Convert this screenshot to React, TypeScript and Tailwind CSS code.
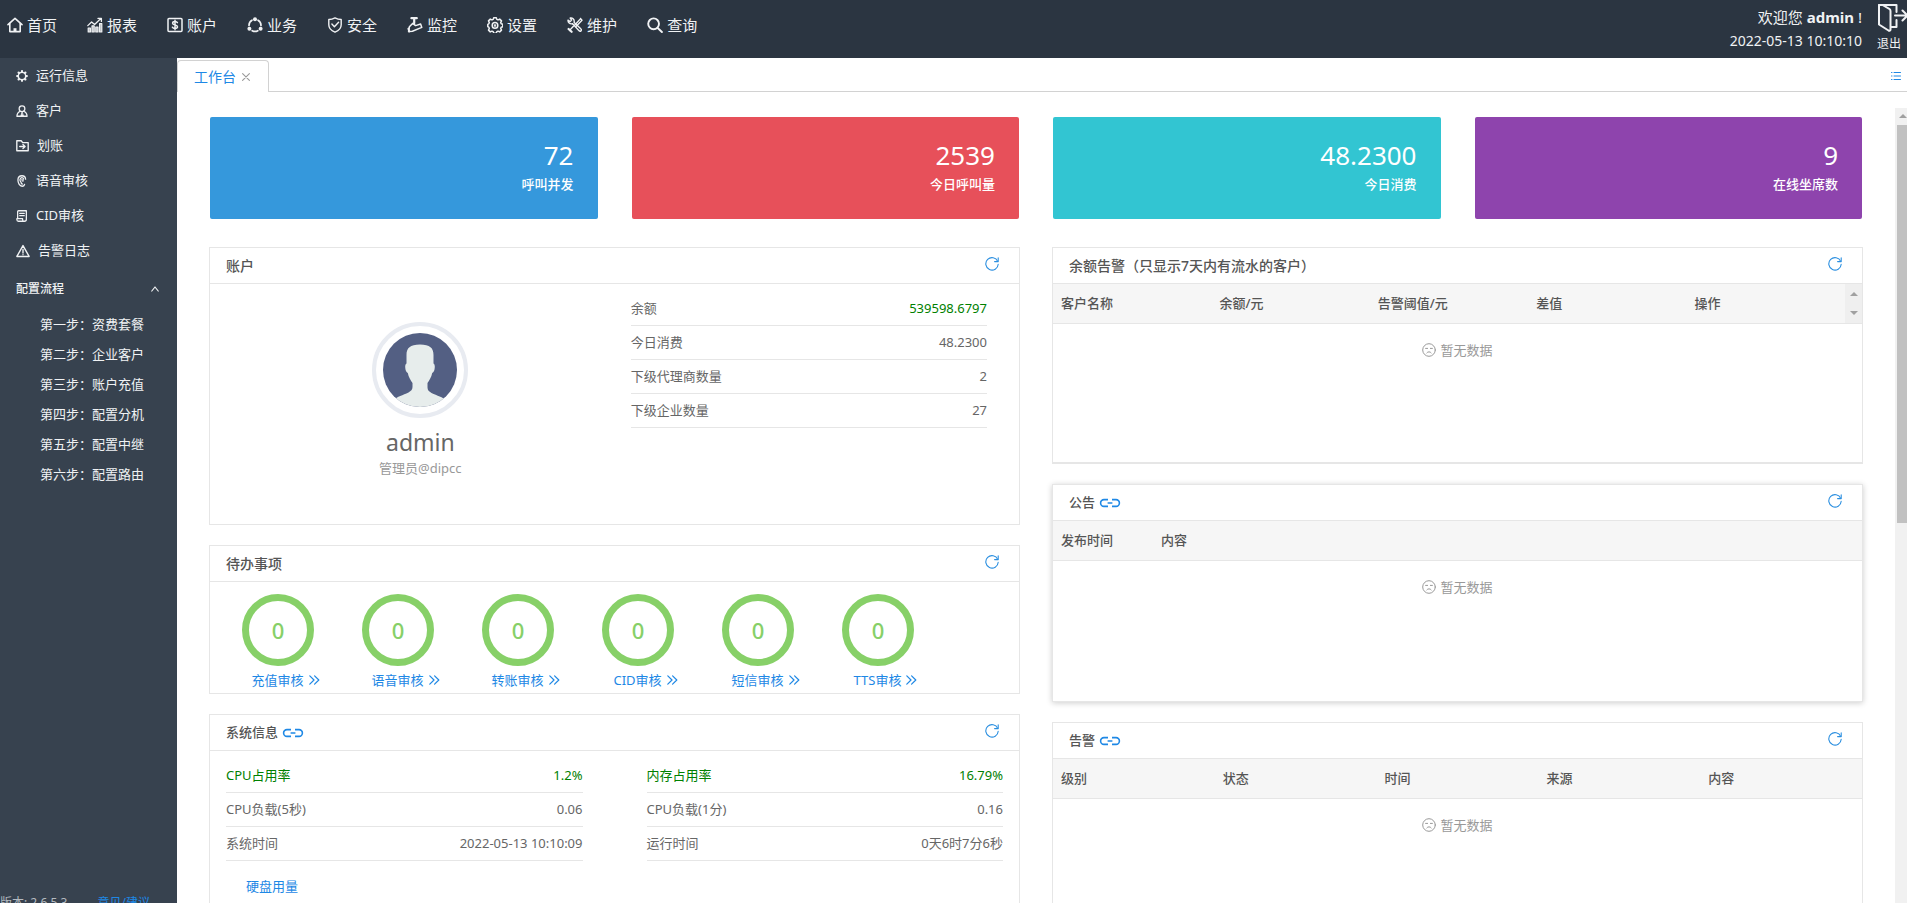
import type { ReactNode } from "react";

type IconProps = { className?: string };

const Svg = ({ children, className = "size-4", box = "0 0 16 16", width = 1.4 }: { children: ReactNode; className?: string; box?: string; width?: number }) => (
  <svg aria-hidden="true" viewBox={box} className={className} fill="none" stroke="currentColor" strokeWidth={width} strokeLinecap="round" strokeLinejoin="round">
    {children}
  </svg>
);

const HomeIcon = () => (
  <Svg width={1.6}>
    <path d="M1 7.6 8 1.4l7 6.2" />
    <path d="M2.8 6.6v8h10.4v-8" />
    <path d="M8 11.2v3.2" strokeWidth={3} strokeLinecap="butt" />
  </Svg>
);
const ReportIcon = () => (
  <Svg width={1.3}>
    <path d="M.8 8.6 4.6 5l3 2.4 6-5.6M11 1.4h3.4v3" />
    <path d="M1.2 11h2.2v4H1.2zM5 8.8h2.2V15H5zM8.8 10h2.2v5H8.8zM12.6 6.6h2.2V15h-2.2z" fill="currentColor" fillOpacity={0.7} strokeWidth={1.2} />
  </Svg>
);
const AccountIcon = () => (
  <Svg width={1.5}>
    <rect x="1" y="1.6" width="14" height="12.8" rx="1" />
    <path d="M10.4 5.6C10 4.8 9.2 4.5 8 4.5c-1.5 0-2.4.7-2.4 1.7 0 2.5 4.9 1.1 4.9 3.6 0 1.1-1 1.7-2.5 1.7-1.3 0-2.2-.5-2.600-1.3M8 3.200v9.600" />
  </Svg>
);
const BusinessIcon = () => (
  <Svg width={1.7}>
    <path d="M5 3.200A6 6 0 0 0 2 8.400M11 3.200a6 6 0 0 1 3 5.200M5.200 13.700a6 6 0 0 0 5.600 0" />
    <g fill="currentColor" stroke="none">
      <circle cx="8" cy="2.200" r="2" />
      <circle cx="2.400" cy="11.800" r="2" />
      <circle cx="13.600" cy="11.800" r="2" />
    </g>
  </Svg>
);
const ShieldIcon = () => (
  <Svg width={1.4}>
    <path d="M8 .9c2 1.100 4.200 1.600 6.200 1.600v5.300c0 3.400-2.400 5.900-6.200 7.400-3.800-1.500-6.200-4-6.200-7.400V2.500C3.800 2.500 6 2 8 .9z" />
    <path d="m4.900 7 2.500 2.700 4.200-4.500" />
  </Svg>
);
const CameraIcon = () => (
  <Svg width={1.5}>
    <path d="M4.400 1.200h5.400M7.200 1.200v5" strokeWidth={2.200} />
    <path d="m2.400 9.800 3.200-3.400 3 2.200 5-1.600 1.200 3.400-9.400 3.800-3.800.4z" />
    <path d="m1.400 11.600.8 3" strokeWidth={2} />
  </Svg>
);
const GearIcon = ({ className = "size-4" }: IconProps) => (
  <Svg className={className} width={1.500}>
    <path d="m6.700.8h2.600l.5 1.600 1.200.5 1.700-.8 1.800 1.800-.8 1.700.5 1.200 1.600.5v2.400l-1.600.5-.5 1.200.8 1.700-1.800 1.800-1.700-.8-1.200.5-.5 1.600H6.700l-.5-1.600-1.200-.5-1.700.8-1.800-1.800.8-1.700-.5-1.200-1-.5V7.300l1-.5.500-1.200-.8-1.700 1.800-1.800 1.700.8 1.200-.5z" />
    <circle cx="8" cy="8.400" r="2.800" />
    <circle cx="8" cy="8.400" r=".5" />
  </Svg>
);
const ToolsIcon = () => (
  <Svg width={1.4}>
    <path d="m5.600 6.800 6 6.400c.8.900 1.700 1.300 2.400.7s.4-1.700-.5-2.400L7.200 5.500" />
    <path d="M1 3.200 3.200 4.600 4.600 3 3.200 1c2.200-.5 4.300 1 4 3.800M1 3.200c-.2 2.300 1.800 4.200 4.400 3.600" />
    <path d="m13.600 1.600-6 6.600M15 3.200 9 9.400M13.600 1.600 15 3.200M6.400 9.200 2.600 13.400" />
    <path d="m1.600 12 3 2.800" strokeWidth={2.200} />
  </Svg>
);
const SearchIcon = () => (
  <Svg width={1.9}>
    <circle cx="6.600" cy="6.800" r="5.400" />
    <path d="m10.700 11 4.200 4" />
  </Svg>
);
const ExitIcon = () => (
  <svg aria-hidden="true" viewBox="0 0 32 29" className="h-[29px] w-8" fill="none" stroke="currentColor" strokeWidth="2" strokeLinejoin="round" strokeLinecap="round">
    <path d="M2 2h17.500v7M19.500 17v7H14" />
    <path d="M2 2v19.500l9.500 6c1 .5 2 0 2-1V8c0-1-.4-1.700-1.200-2.200L5.500 2" />
    <path d="M18 12.500h12M25.500 7.500l5 5-5 5" />
  </svg>
);

const RunIcon = () => (
  <Svg className="size-3" width={1.8}>
    <circle cx="8" cy="8" r="4.900" />
    <path d="M8 1.600v.8M8 13.600v.8M1.600 8h.8M13.600 8h.8M3.500 3.500l.6.6M11.900 11.900l.6.6M3.500 12.500l.6-.6M11.900 4.100l.6-.6" strokeWidth={3} />
  </Svg>
);
const CustomerIcon = () => (
  <Svg className="size-3" width={1.7}>
    <circle cx="8" cy="5" r="3.800" />
    <path d="M5.600 8.600C3 9.400 1.400 11.600 1.200 15h13.600c-.2-3.400-1.800-5.600-4.400-6.400" />
    <path d="M8 9.600 6.400 14.600h3.200z" fill="currentColor" strokeWidth={1} />
  </Svg>
);
const TransferIcon = () => (
  <Svg className="size-[13px]" width={1.7}>
    <path d="M1 2.200h5.400l1.800 2.200H15v10H1z" />
    <path d="M4.600 9.200h6M8.600 6.800l2.600 2.400-2.600 2.400" />
  </Svg>
);
const EarIcon = () => (
  <Svg className="size-3" width={1.7}>
    <path d="M12.800 5.600C12.600 3 10.800 1 8 1 5 1 2.600 3.200 2.600 6.600c0 3.800 2 8.400 5.600 8.400 1.800 0 2.800-1 3.200-2.400" />
    <path d="M10.200 5.400C9.800 4.200 9 3.600 8 3.600c-1.600 0-2.700 1.200-2.700 3 0 2.200 1.500 2.200 1.700 3.800.2 1.200.8 1.800 1.600 1.600M7.600 6.600c1.500-.5 2.300.6 1.600 1.800" />
  </Svg>
);
const DocIcon = () => (
  <Svg className="size-3" width={1.7}>
    <path d="M2.200 11.600V2.400C2.200 1.600 2.600 1 3.600 1h10.200v11.400c0 1.600-.8 2.600-2.400 2.600H3.200c-1.400 0-2-.8-2-2v-1.400h7.600V13c0 1.200.8 2 2 2" />
    <path d="M5 4.600h6M5 7.600h6" />
  </Svg>
);
const WarnIcon = () => (
  <Svg className="size-[14px]" width={1.6}>
    <path d="M8 1.800 15 14.200H1z" />
    <path d="M8 6.200v4M8 12.200v.1" />
  </Svg>
);

const RefreshIcon = () => (
  <Svg className="size-[14px]" box="0 0 14 14" width={1.1}>
    <path d="M12.700 4.400A6.200 6.200 0 1 0 13.200 7.200" />
    <path d="M13.200.9v3.700H9.600" />
  </Svg>
);
const LinkIcon = () => (
  <svg aria-hidden="true" viewBox="0 0 22 10" className="h-[10px] w-[22px]" fill="none" stroke="currentColor" strokeWidth="1.600">
    <path d="M9 1.600H5a3.300 3.300 0 0 0 0 6.800h4M13 1.600h4a3.300 3.300 0 0 1 0 6.800h-4M8.600 5h4.800" />
  </svg>
);
const SadIcon = () => (
  <Svg className="size-[14px]" box="0 0 14 14" width={1}>
    <circle cx="7" cy="7" r="6.300" />
    <path d="M3.600 5.400h2M8.400 5.400h2M4.800 9.900c1-1.500 3.400-1.500 4.400 0" />
  </Svg>
);
const MoreIcon = () => (
  <Svg className="h-[10px] w-[11px]" box="0 0 11 10" width={1.2}>
    <path d="m.8.8 4.200 4.200L.8 9.200M5.600.8 9.800 5 5.600 9.200" />
  </Svg>
);
const Avatar = () => (
  <span className="flex size-24 items-center justify-center rounded-full border-4 border-[#e8ebf1]">
    <svg role="img" aria-label="admin" viewBox="0 0 74 74" className="size-[74px]">
      <clipPath id="face">
        <circle cx="37" cy="37" r="37" />
      </clipPath>
      <g clipPath="url(#face)">
        <rect width="74" height="74" fill="#535f83" />
        <path
          fill="#e7edec"
          d="M23.500 22c0-7 3.500-10.500 13.500-10.500S50.500 15 50.500 22v8.500c1.500 1 1.500 3.500 1 6-.4 2-1.300 3-2.300 3.500-.7 4-3 7.500-4.700 10v4.500c0 2.500 1.500 4 4 5.500 5.500 2.500 11.500 4.500 14.500 7V76H11v-9.500c3-2.500 9-4.500 14.500-7 2.500-1.500 4-3 4-5.500V50c-1.700-2.500-4-6-4.700-10-1-.5-1.900-1.500-2.300-3.500-.5-2.500-.5-5 1-6z"
        />
      </g>
    </svg>
  </span>
);

const nav = [
  { label: "首页", icon: <HomeIcon /> },
  { label: "报表", icon: <ReportIcon /> },
  { label: "账户", icon: <AccountIcon /> },
  { label: "业务", icon: <BusinessIcon /> },
  { label: "安全", icon: <ShieldIcon /> },
  { label: "监控", icon: <CameraIcon /> },
  { label: "设置", icon: <GearIcon /> },
  { label: "维护", icon: <ToolsIcon /> },
  { label: "查询", icon: <SearchIcon /> },
];
const side = [
  { label: "运行信息", icon: <RunIcon /> },
  { label: "客户", icon: <CustomerIcon /> },
  { label: "划账", icon: <TransferIcon /> },
  { label: "语音审核", icon: <EarIcon /> },
  { label: "CID审核", icon: <DocIcon /> },
  { label: "告警日志", icon: <WarnIcon /> },
];
const steps = ["第一步：资费套餐", "第二步：企业客户", "第三步：账户充值", "第四步：配置分机", "第五步：配置中继", "第六步：配置路由"];
const stats = [
  { value: "72", label: "呼叫并发", color: "bg-[#3598dc]" },
  { value: "2539", label: "今日呼叫量", color: "bg-[#e7505a]" },
  { value: "48.2300", label: "今日消费", color: "bg-[#32c5d2]" },
  { value: "9", label: "在线坐席数", color: "bg-[#8e44ad]" },
];
const todos = ["充值审核", "语音审核", "转账审核", "CID审核", "短信审核", "TTS审核"];

function Panel({ title, link, raised, className = "", children }: { title: string; link?: boolean; raised?: boolean; className?: string; children: ReactNode }) {
  return (
    <section className={`border border-[#e6e6e6] bg-white ${raised ? "shadow-[0_1px_6px_rgba(0,0,0,0.2)]" : ""} ${className}`}>
      <header className="flex h-9 items-center justify-between border-b border-[#e6e6e6] pr-5 pl-4">
        <h2 className={`flex items-center gap-1 font-medium text-[#555] ${link ? "text-[13px]" : "text-sm"}`}>
          {title}
          {link && (
            <a href="#detail" aria-label={`${title}详情`} className="text-[#1e88e5]">
              <LinkIcon />
            </a>
          )}
        </h2>
        <button type="button" aria-label={`刷新${title}`} className="mb-1 text-[#2b8fe0]">
          <RefreshIcon />
        </button>
      </header>
      {children}
    </section>
  );
}

function Row({ name, value, nameGreen, valueGreen }: { name: string; value: string; nameGreen?: boolean; valueGreen?: boolean }) {
  return (
    <div className="flex h-[34px] items-center justify-between border-b border-[#e6e6e6]">
      <dt className={nameGreen ? "text-[#008000]" : ""}>{name}</dt>
      <dd className={valueGreen ? "text-[#008000]" : ""}>{value}</dd>
    </div>
  );
}

function Grid({ columns, narrowFirst, stepper }: { columns: string[]; narrowFirst?: boolean; stepper?: boolean }) {
  return (
    <>
      <div className="flex border-b border-[#e6e6e6] bg-[#f6f6f6]">
        <div className="min-w-0 flex-1">
          <table className="w-full table-fixed">
            <thead>
              <tr className="h-[39px]">
                {columns.map((c, i) => (
                  <th key={c} scope="col" className={`pl-2 text-left font-medium text-[#555] ${narrowFirst && i === 0 ? "w-[100px]" : ""}`}>
                    {c}
                  </th>
                ))}
              </tr>
            </thead>
          </table>
        </div>
        {stepper && (
          <div className="flex w-[17px] flex-col items-center justify-between bg-[#efefef] py-2">
            <span className="border-x-4 border-b-4 border-x-transparent border-b-[#a0a0a0]" />
            <span className="border-x-4 border-t-4 border-x-transparent border-t-[#a0a0a0]" />
          </div>
        )}
      </div>
      <p className="flex items-center justify-center gap-1 pt-4 leading-5 text-[#999]">
        <SadIcon />
        暂无数据
      </p>
    </>
  );
}

export default function App() {
  return (
    <div className="flex h-screen flex-col overflow-hidden bg-white font-['Noto_Sans','Noto_Sans_CJK_SC',sans-serif] text-[13px] text-[#666]">
      <header className="flex h-[58px] shrink-0 justify-between bg-[#2b3541] text-[#f0f2f4]">
        <nav className="flex h-[50px] items-center gap-[30px] pl-[7px]">
          {nav.map((n) => (
            <a key={n.label} href="#nav" className="flex items-center gap-1 text-[15px] leading-5">
              {n.icon}
              {n.label}
            </a>
          ))}
        </nav>
        <div className="flex gap-[15px]">
          <div className="pt-[5px] text-right text-[15px] leading-6">
            <p>
              欢迎您 <b>admin</b> !
            </p>
            <p className="text-sm leading-6">2022-05-13 10:10:10</p>
          </div>
          <button type="button" className="flex w-[30px] flex-col items-start overflow-hidden pt-[3px] text-xs leading-6">
            <ExitIcon />
            退出
          </button>
        </div>
      </header>

      <div className="flex min-h-0 flex-1">
        <aside className="flex w-[177px] shrink-0 flex-col overflow-hidden bg-[#37424f] text-[#f0f2f4]">
          {side.map((s) => (
            <a key={s.label} href="#menu" className="flex h-[35px] shrink-0 items-center gap-2 pl-4">
              {s.icon}
              {s.label}
            </a>
          ))}
          <button type="button" className="flex h-[42px] shrink-0 items-center justify-between pr-[18px] pl-4 text-xs font-medium">
            配置流程
            <Svg className="size-2" box="0 0 8 8" width={1.2}>
              <path d="m.8 6 3.200-4L7.200 6" />
            </Svg>
          </button>
          {steps.map((s) => (
            <a key={s} href="#step" className="flex h-[30px] shrink-0 items-center pl-10">
              {s}
            </a>
          ))}
          <footer className="-mb-2.5 mt-auto flex shrink-0 gap-[30px] text-xs leading-5 text-[#b4bac0]">
            <span>版本: 2.6.5.3</span>
            <a href="#feedback" className="text-[#1e88e5]">
              意见/建议
            </a>
          </footer>
        </aside>

        <main className="flex min-w-0 flex-1 flex-col">
          <div className="flex h-[34px] shrink-0 items-stretch pt-0.5">
            <div className="flex w-[92px] items-center gap-1.5 rounded-t border border-b-0 border-[#d2d2d2] pl-4 text-sm text-[#1e88e5]">
              工作台
              <button type="button" aria-label="关闭工作台" className="text-[#999]">
                <Svg className="size-2" box="0 0 8 8" width={1.1}>
                  <path d="m.6.6 6.800 6.800M7.400.6.6 7.400" />
                </Svg>
              </button>
            </div>
            <div className="flex flex-1 items-center justify-end border-b border-[#d2d2d2] pr-1.5">
              <button type="button" aria-label="标签页列表" className="text-[#1e88e5]">
                <Svg className="h-2 w-[10px]" box="0 0 10 8" width={1}>
                  <path d="M.5.5h.5M3 .5h6.500M.5 4h.5M3 4h6.500M.5 7.500h.5M3 7.500h6.500" />
                </Svg>
              </button>
            </div>
          </div>

          <div className="flex min-h-0 flex-1">
            <div className="min-w-0 flex-1 overflow-hidden pt-[25px] pr-8 pl-8">
              <div className="grid grid-cols-4 gap-[34px] px-px">
                {stats.map((s) => (
                  <div key={s.label} className={`h-[102px] rounded-xs pt-5 pr-6 text-right text-white ${s.color}`}>
                    <p className="text-[26px] leading-9">{s.value}</p>
                    <p className="text-[13px] leading-[22px] font-medium">{s.label}</p>
                  </div>
                ))}
              </div>

              <div className="mt-7 grid grid-cols-2 gap-8">
                <div className="flex flex-col gap-5">
                  <Panel title="账户" className="h-[278px]">
                    <div className="grid grid-cols-[52fr_48fr]">
                      <div className="flex flex-col items-center pt-[38px]">
                        <Avatar />
                        <p className="mt-2 text-[23px] leading-8">admin</p>
                        <p className="leading-5 text-[#999]">管理员@dipcc</p>
                      </div>
                      <dl className="mr-8 pt-2">
                        <Row name="余额" value="539598.6797" valueGreen />
                        <Row name="今日消费" value="48.2300" />
                        <Row name="下级代理商数量" value="2" />
                        <Row name="下级企业数量" value="27" />
                      </dl>
                    </div>
                  </Panel>
                  <Panel title="待办事项" className="h-[149px]">
                    <div className="flex pt-3 pl-2">
                      {todos.map((t) => (
                        <div key={t} className="flex w-[120px] flex-col items-center">
                          <span className="flex size-[72px] items-center justify-center rounded-full border-[7px] border-[#87d068] text-[22px] leading-6 font-medium text-[#87d068]">0</span>
                          <a href="#todo" className="flex items-center gap-[5px] pt-1 pl-[15px] leading-5 text-[#1e88e5]">
                            {t}
                            <MoreIcon />
                          </a>
                        </div>
                      ))}
                    </div>
                  </Panel>
                  <Panel title="系统信息" link className="h-[300px]">
                    <div className="grid grid-cols-2 gap-16 px-4 pt-2">
                      <dl>
                        <Row name="CPU占用率" value="1.2%" nameGreen valueGreen />
                        <Row name="CPU负载(5秒)" value="0.06" />
                        <Row name="系统时间" value="2022-05-13 10:10:09" />
                      </dl>
                      <dl>
                        <Row name="内存占用率" value="16.79%" nameGreen valueGreen />
                        <Row name="CPU负载(1分)" value="0.16" />
                        <Row name="运行时间" value="0天6时7分6秒" />
                      </dl>
                    </div>
                    <a href="#disk" className="mt-[15px] ml-9 inline-block leading-5 text-[#1e88e5]">
                      硬盘用量
                    </a>
                  </Panel>
                </div>

                <div className="flex flex-col gap-5">
                  <Panel title="余额告警（只显示7天内有流水的客户）" className="h-[217px] border-b-2">
                    <Grid columns={["客户名称", "余额/元", "告警阈值/元", "差值", "操作"]} stepper />
                  </Panel>
                  <Panel title="公告" link raised className="h-[218px]">
                    <Grid columns={["发布时间", "内容"]} narrowFirst />
                  </Panel>
                  <Panel title="告警" link className="h-[217px]">
                    <Grid columns={["级别", "状态", "时间", "来源", "内容"]} />
                  </Panel>
                </div>
              </div>
            </div>
            <div aria-hidden="true" className="mt-4 flex w-3 shrink-0 flex-col overflow-hidden bg-[#f1f1f1] pl-0.5">
              <span className="mt-1.5 mb-[7px] ml-0.5 w-0 border-x-4 border-b-4 border-x-transparent border-b-[#a0a0a0]" />
              <span className="h-1/2 bg-[#c1c1c1]" />
            </div>
          </div>
        </main>
      </div>
    </div>
  );
}
